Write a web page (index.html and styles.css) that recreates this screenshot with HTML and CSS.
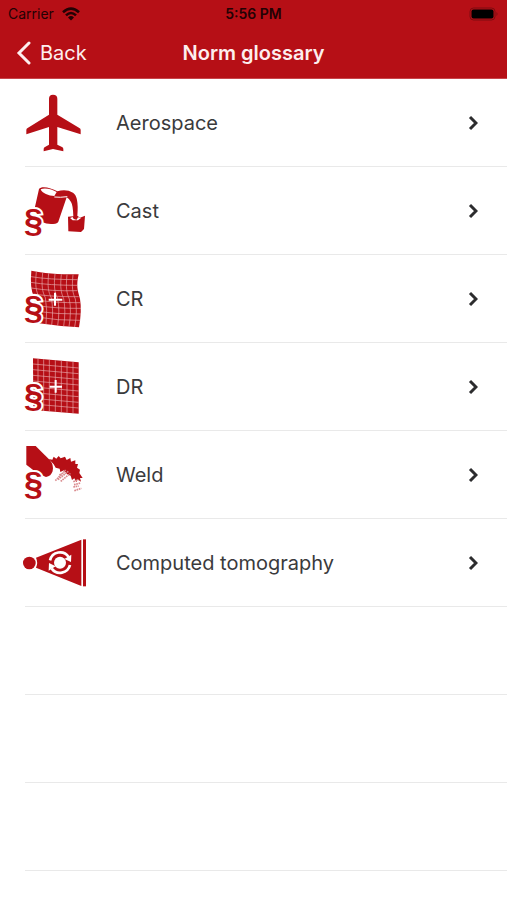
FILE: index.html
```
<!DOCTYPE html>
<html lang="en">
    <head>
        <meta charset="UTF-8">
        <meta name="viewport" content="width=device-width, initial-scale=1">
        <title>Norm glossary</title>
        <link rel="stylesheet" href="styles.css">
    </head>
    <body>
        <header class="top">
            <div class="status">
                <span class="carrier">Carrier
                    <svg class="wifi" viewBox="0 0 18 14" aria-hidden="true">
                        <g fill="none" stroke="currentColor" stroke-width="2.6">
                            <path d="M1 5.200Q9-2 17 5.200"/>
                            <path d="M4 8.400Q9 3.600 14 8.400"/>
                        </g>
                        <path d="M6 10.400Q9 7.600 12 10.400L9 13.500z" fill="currentColor"/>
                    </svg>
                </span>
                <span class="time">5:56 PM</span>
                <svg class="battery" viewBox="0 0 30 14" aria-hidden="true">
                    <rect x="1" y="1" width="25" height="12" rx="3.500" fill="none" stroke="#7d0c10"/>
                    <rect x="2.500" y="2.500" width="22" height="9" rx="2"/>
                    <path d="M27.500 5q2 2-0 4z" fill="#7d0c10"/>
                </svg>
            </div>
            <nav class="bar">
                <a class="back" href="#">
                    <svg class="back-arrow" viewBox="0 0 16 24" aria-hidden="true"><path d="M13 2L3 12L13 22"/></svg>
                    Back
                </a>
                <h1 class="title">Norm glossary</h1>
            </nav>
        </header>
        <ul class="list">
            <li class="row">
                <a class="link" href="#">
                    <svg class="icon" viewBox="33 27 180 180" aria-hidden="true">
                        <path d="M105 44Q105 32 117 32Q130 32 130 44V92L196 132Q200 134 200 138V151L130 129V182L144 189Q148 191 148 195V202L117 195L89 202V195Q89 191 93 189L105 182V129L37 151V138Q37 134 41 132L105 92z"/>
                    </svg>
                    <span class="name">Aerospace</span>
                    <svg class="arrow" viewBox="0 0 10 16" aria-hidden="true"><path d="M2 2L8 8L2 14"/></svg>
                </a>
            </li>
            <li class="row">
                <a class="link" href="#">
                    <svg class="icon" viewBox="33 21 180 180" aria-hidden="true">
                        <path d="M75 45C82 35 111 41 130 52Q156 44 177 56Q195 67 190 125L198 131L213 125L210 165L201 174L163 172L162 128L178 127Q177 93 171 84Q167 75 158 70L133 143Q131 148 124 149Q102 153 84 144L60 112z"/>
                        <path class="cut" d="M80 46C92 40 116 46 128 54L121 66C104 66 84 58 80 46z"/>
                        <path class="line" d="M121 69Q138 71 160 68"/>
                        <path class="cut" d="M168 132L176 129Q178 137 188 137L192 130L201 132L192 139H176z"/>
                        <text class="sign" x="30" y="175">§</text>
                    </svg>
                    <span class="name">Cast</span>
                    <svg class="arrow" viewBox="0 0 10 16" aria-hidden="true"><path d="M2 2L8 8L2 14"/></svg>
                </a>
            </li>
            <li class="row">
                <a class="link" href="#">
                    <svg class="icon" viewBox="33 27 180 180" aria-hidden="true">
                        <path d="M52 32Q100 43 194 43C186 78 191 91 198 117Q204 151 195 202Q136 199 75 190L60 110Q47 87 52 32z"/>
                        <g class="grid">
                            <path d="M67 35C63 78 66 92 75 111Q82 151 77 190M86 38C82 80 85 95 94 113Q101 149 96 193M104 40C100 80 103 96 112 114Q119 151 113 195M123 42C119 81 122 98 131 115Q138 151 131 197M142 43C138 83 141 98 149 116Q156 153 149 199M159 44C155 84 158 99 166 117Q173 153 165 200M177 44C173 84 176 99 184 117Q191 153 182 201"/>
                            <path d="M51 50Q105 59 191 59M50 67Q105 76 189 76M52 84Q110 94 190 92M58 102Q115 111 194 110M62 119Q120 129 198 128M65 136Q125 146 201 145M66 154Q130 163 201 162M67 171Q130 182 199 181"/>
                        </g>
                        <path class="plus" d="M123 98V137M104 119L145 119"/>
                        <text class="sign" x="30" y="178">§</text>
                    </svg>
                    <span class="name">CR</span>
                    <svg class="arrow" viewBox="0 0 10 16" aria-hidden="true"><path d="M2 2L8 8L2 14"/></svg>
                </a>
            </li>
            <li class="row">
                <a class="link" href="#">
                    <svg class="icon" viewBox="33 27 180 180" aria-hidden="true">
                        <path d="M57 31L194 43V197L58 186z"/>
                        <g class="grid">
                            <path d="M72 32V187M89 34V189M106 35V190M124 37V191M142 38V193M159 40V194M177 41V196"/>
                            <path d="M57 48L194 60M57 65L194 77M57 82L194 94M57 99L194 111M57 117L194 129M57 134L194 146M57 151L194 163M57 168L194 180"/>
                        </g>
                        <path class="plus" d="M125 96V134M107 116H144"/>
                        <text class="sign" x="30" y="177">§</text>
                    </svg>
                    <span class="name">DR</span>
                    <svg class="arrow" viewBox="0 0 10 16" aria-hidden="true"><path d="M2 2L8 8L2 14"/></svg>
                </a>
            </li>
            <li class="row">
                <a class="link" href="#">
                    <svg class="icon" viewBox="33 27 180 180" aria-hidden="true">
                        <path d="M37 30H65L108 73Q120 88 116 105Q111 121 96 123L70 112L37 86z"/>
                        <path d="M104 69L115 71L119 62L127 68L134 60L140 67L153 62L158 72L169 66L171 77L184 73L184 84L192 84L189 95L198 101L196 111L206 126L198 126L201 137L191 130L187 139L181 127L174 132L170 119L160 115L150 103L139 108L137 98L125 95L119 85z"/>
                        <g class="sparks">
                            <path d="M124 134L155 102M132 131L163 106M140 136L169 112M136 117L151 109"/>
                            <path d="M178 137L193 131M180 146L200 141M178 153L194 150M181 164L202 157"/>
                        </g>
                        <text class="sign" x="30" y="178">§</text>
                    </svg>
                    <span class="name">Weld</span>
                    <svg class="arrow" viewBox="0 0 10 16" aria-hidden="true"><path d="M2 2L8 8L2 14"/></svg>
                </a>
            </li>
            <li class="row">
                <a class="link" href="#">
                    <svg class="icon" viewBox="33 27 180 180" aria-hidden="true">
                        <circle cx="46" cy="117" r="19"/>
                        <path d="M66 101L202 47V186L66 131Q73 116 66 101z"/>
                        <path d="M207 46H216V187H207z"/>
                        <circle class="cut" cx="138" cy="116" r="18"/>
                        <path class="turn" d="M108 109A31 31 0 0 1 164 99M168 123A31 31 0 0 1 113 134"/>
                        <path class="cut" d="M172 92L171 114L151 105zM104 140L105 117L125 127z"/>
                    </svg>
                    <span class="name">Computed tomography</span>
                    <svg class="arrow" viewBox="0 0 10 16" aria-hidden="true"><path d="M2 2L8 8L2 14"/></svg>
                </a>
            </li>
            <li class="row"></li>
            <li class="row"></li>
            <li class="row"></li>
        </ul>
    </body>
</html>
```

FILE: styles.css
```
*{
    box-sizing: border-box;
}
body{
    margin: 0;
    background-color: white;
    color: #3a3a3c;
    font-family: Inter, "Liberation Sans", sans-serif;
    font-size: 20px;
    line-height: 24px;
}
a{
    color: inherit;
    text-decoration: none;
}
.top{
    background-color: #b60f16;
    border-bottom: 1px solid #c8454b;
}
.status{
    display: grid;
    grid-template-columns: 1fr auto 1fr;
    align-items: center;
    height: 28px;
    padding: 0 8px;
    color: #230204;
    font-size: 14px;
}
.carrier{
    display: flex;
    align-items: center;
    gap: 8px;
}
.wifi{
    width: 18px;
    height: 14px;
}
.time{
    font-weight: 600;
}
.battery{
    width: 30px;
    height: 14px;
    justify-self: end;
}
.bar{
    display: grid;
    grid-template-columns: 1fr auto 1fr;
    align-items: center;
    height: 50px;
    padding: 0 16px;
    color: #fdeeee;
}
.back{
    display: flex;
    align-items: center;
    gap: 8px;
}
.back-arrow{
    width: 16px;
    height: 24px;
    fill: none;
    stroke: currentColor;
    stroke-width: 3;
    stroke-linecap: round;
}
.title{
    margin: 0;
    font-size: 20px;
    font-weight: 600;
}
.list{
    margin: 0;
    padding: 0 0 0 25px;
    list-style: none;
}
.row{
    height: 88px;
    border-bottom: 1px solid #e9e9e9;
}
.link{
    display: flex;
    align-items: center;
    height: 100%;
    padding-right: 29px;
}
.icon{
    width: 60px;
    height: 60px;
    margin-right: 31px;
    overflow: visible;
    fill: #b60f16;
}
.name{
    flex: 1;
}
.arrow{
    width: 10px;
    height: 16px;
    fill: none;
    stroke: #2c2c2e;
    stroke-width: 3;
}
/* icon parts */
.cut{
    fill: white;
}
.line, .grid, .plus, .turn, .sparks{
    fill: none;
    stroke: white;
    stroke-width: 3;
}
.grid{
    stroke: #e9a9ac;
    stroke-width: 2;
}
.plus{
    stroke-width: 6;
}
.turn{
    stroke-width: 8;
}
.sparks{
    stroke: #d98a8d;
    stroke-width: 5;
    stroke-dasharray: 5 2;
}
.sign{
    font-family: "Liberation Sans", Arial, sans-serif;
    font-size: 102px;
    font-weight: 700;
    stroke: white;
    stroke-width: 12;
    paint-order: stroke;
}
```
